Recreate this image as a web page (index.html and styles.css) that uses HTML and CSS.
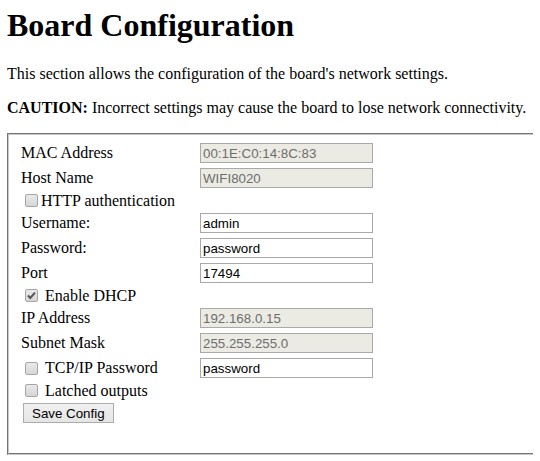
FILE: index.html
```html
<!DOCTYPE html>
<html>
<head>
<meta charset="utf-8">
<title>Board Configuration</title>
<link rel="stylesheet" href="styles.css">
</head>
<body>
<h1 class="title">Board Configuration</h1>
<p class="intro">This section allows the configuration of the board's network settings.</p>
<p class="intro"><b>CAUTION:</b> Incorrect settings may cause the board to lose network connectivity.</p>
<form class="config">
  <fieldset class="box">
    <div class="grid">
      <span class="lbl">MAC Address</span>
      <input class="field" type="text" value="00:1E:C0:14:8C:83" disabled>

      <span class="lbl">Host Name</span>
      <input class="field" type="text" value="WIFI8020" disabled>

      <label class="lbl check span2"><span class="cb"></span>HTTP authentication</label>

      <span class="lbl">Username:</span>
      <input class="field" type="text" value="admin">

      <span class="lbl">Password:</span>
      <input class="field" type="text" value="password">

      <span class="lbl">Port</span>
      <input class="field" type="text" value="17494">

      <label class="lbl check span2"><span class="cb on"><svg viewBox="0 0 13 13" width="13" height="13"><path d="M3 6.5 L5.3 9 L10 3.6" fill="none" stroke="#555" stroke-width="2"/></svg></span>&nbsp;Enable DHCP</label>

      <span class="lbl">IP Address</span>
      <input class="field" type="text" value="192.168.0.15" disabled>

      <span class="lbl">Subnet Mask</span>
      <input class="field" type="text" value="255.255.255.0" disabled>

      <label class="lbl check"><span class="cb"></span>&nbsp;TCP/IP Password</label>
      <input class="field" type="text" value="password">

      <label class="lbl check span2"><span class="cb"></span>&nbsp;Latched outputs</label>

      <span class="lbl span2"><button class="btn" type="button">Save Config</button></span>
    </div>
  </fieldset>
</form>
</body>
</html>
```

FILE: styles.css
```css
html {
  overflow: hidden;
  background: #fff;
}
body {
  margin: 7px;
  font-family: "Liberation Serif", "Times New Roman", serif;
  font-size: 16px;
  color: #000;
}
.title {
  font-size: 32px;
  font-weight: bold;
  margin: 0 0 21px 0;
}
.intro {
  margin: 16px 0;
}
.config {
  margin: 0;
}
.box {
  margin: 0;
  width: 560px;
  border: 2px groove #c8c8c8;
  padding: 8px 12px 30px 12px;
  box-sizing: border-box;
}
.grid {
  display: grid;
  grid-template-columns: 179px 173px;
  grid-auto-rows: auto;
  row-gap: 5px;
  align-items: center;
}
.lbl {
  display: flex;
  align-items: center;
  height: 20px;
  white-space: nowrap;
}
.check {
  height: 15px;
}
.span2 {
  grid-column: 1 / span 2;
}
.cb {
  display: inline-block;
  width: 13px;
  height: 13px;
  box-sizing: border-box;
  margin: 0 3px 0 4px;
  border: 1px solid #a6a6a6;
  border-radius: 2px;
  background: linear-gradient(#e9e9e9, #d6d6d6);
  flex: none;
}
.cb svg {
  display: block;
  margin: -1px;
}
.field {
  box-sizing: border-box;
  width: 173px;
  height: 20px;
  margin: 0;
  padding: 0 2px;
  border: 1px solid #a9a9a9;
  font-family: "Liberation Sans", Arial, sans-serif;
  font-size: 13.33px;
  color: #000;
  background: #fff;
}
.field:disabled {
  background: #ebebe4;
  color: #6d6d6d;
}
.btn {
  margin: 0 0 0 2px;
  height: 20px;
  padding: 0 8px;
  border: 1px solid #acacac;
  border-radius: 0;
  background: linear-gradient(#f0f0f0, #e5e5e5);
  font-family: "Liberation Sans", Arial, sans-serif;
  font-size: 13.33px;
  color: #000;
}
```
